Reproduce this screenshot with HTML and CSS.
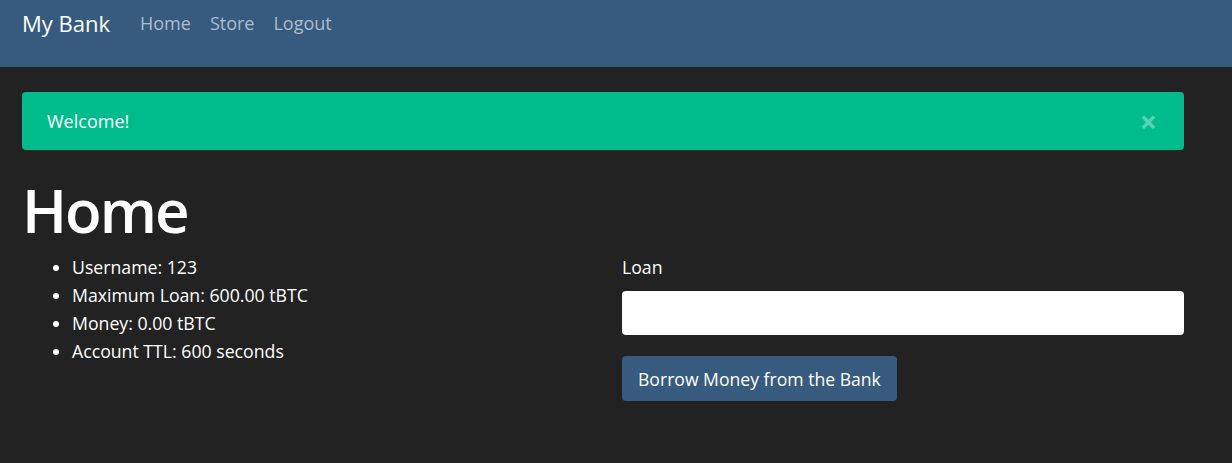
FILE: index.html
```html
<!DOCTYPE html>
<html lang="en">
<head>
<meta charset="utf-8">
<title>My Bank</title>
<link rel="stylesheet" href="styles.css">
</head>
<body>
<nav class="navbar">
  <a class="brand" href="#">My Bank</a>
  <ul class="nav-links">
    <li><a href="#">Home</a></li>
    <li><a href="#">Store</a></li>
    <li><a href="#">Logout</a></li>
  </ul>
</nav>
<main class="container">
  <div class="alert">
    <span>Welcome!</span>
    <button class="close" type="button" aria-label="Close">&times;</button>
  </div>
  <h1 class="title">Home</h1>
  <div class="row">
    <div class="col-info">
      <ul class="info">
        <li>Username: 123</li>
        <li>Maximum Loan: 600.00 tBTC</li>
        <li>Money: 0.00 tBTC</li>
        <li>Account TTL: 600 seconds</li>
      </ul>
    </div>
    <form class="col-form">
      <label class="label" for="loan">Loan</label>
      <input class="input" id="loan" type="text">
      <button class="btn" type="button">Borrow Money from the Bank</button>
    </form>
  </div>
</main>
</body>
</html>
```
FILE: styles.css
```css
* { box-sizing: border-box; }
html, body { margin: 0; padding: 0; }
body {
  background: #222222;
  color: #ffffff;
  font-family: "Open Sans", "Noto Sans", sans-serif;
  font-size: 17.7px;
}
.navbar {
  background: #375a7f;
  height: 67px;
  display: flex;
  align-items: flex-start;
  padding: 7px 22px 0;
}
.brand {
  color: #ffffff;
  text-decoration: none;
  font-size: 22px;
  line-height: 33px;
  margin-right: 30px;
}
.nav-links {
  list-style: none;
  margin: 0;
  padding: 0;
  display: flex;
  gap: 19px;
}
.nav-links a {
  color: rgba(255,255,255,0.6);
  text-decoration: none;
  font-size: 18px;
  line-height: 32px;
}
.container {
  padding: 25px 48px 0 22px;
}
.alert {
  background: #00bc8c;
  border-radius: 4px;
  height: 58px;
  display: flex;
  align-items: center;
  justify-content: space-between;
  padding: 0 27px 0 25px;
  font-size: 18px;
}
.close {
  background: none;
  border: 0;
  color: #ffffff;
  opacity: 0.35;
  font-size: 30px;
  font-weight: 700;
  font-family: "Open Sans", sans-serif;
  line-height: 1;
  padding: 0;
  margin-top: 2px;
}
.title {
  font-size: 60px;
  letter-spacing: -2px;
  font-weight: 600;
  margin: 20px 0 0;
  line-height: 80px;
}
.row {
  display: flex;
  align-items: flex-start;
  margin-top: 3px;
}
.col-info { width: 600px; }
.col-form {
  flex: 1;
  display: flex;
  flex-direction: column;
  align-items: flex-start;
}
.info {
  margin: 0;
  padding-left: 50px;
}
.info li { line-height: 28px; }
.label {
  line-height: 28px;
  margin-bottom: 10px;
}
.input {
  width: 100%;
  height: 44px;
  border: 0;
  border-radius: 4px;
  background: #ffffff;
  margin-bottom: 21px;
}
.btn {
  background: #375a7f;
  color: #ffffff;
  border: 0;
  border-radius: 4px;
  height: 45px;
  padding: 0 16px;
  font-family: inherit;
  font-size: 17.6px;
}
```
